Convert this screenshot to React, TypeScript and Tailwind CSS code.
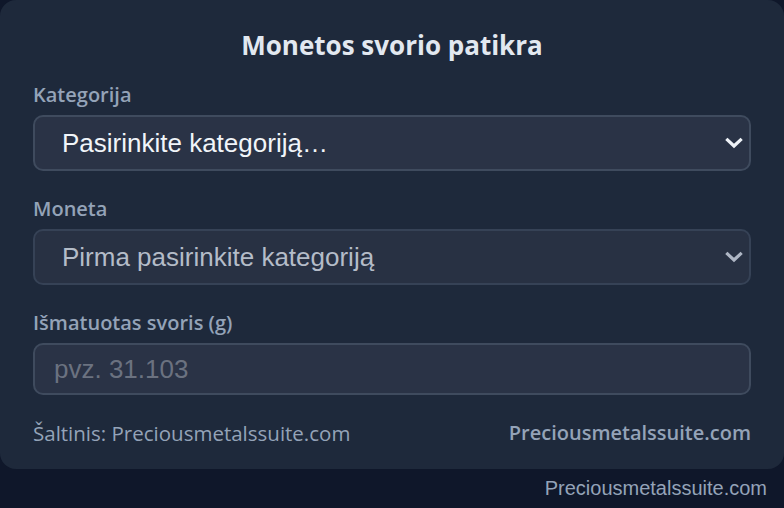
import { useState } from 'react';

const uiFont = { fontFamily: '"Open Sans", "Noto Sans", sans-serif' };
const fieldFont = { fontFamily: '"Liberation Sans", Arial, sans-serif' };

function Chevron({ muted }: { muted?: boolean }) {
  return (
    <svg
      className="pointer-events-none absolute right-[7px] top-1/2 -translate-y-1/2"
      width="20"
      height="20"
      viewBox="0 0 20 20"
      fill="none"
      stroke={muted ? '#aeb6c4' : '#eef2f7'}
      strokeWidth={3.2}
      strokeLinecap="square"
    >
      <path d="M3.5 7 10 13l6.5-6" />
    </svg>
  );
}

export default function App() {
  const [category, setCategory] = useState('');
  const [coin, setCoin] = useState('');
  const [weight, setWeight] = useState('');

  return (
    <div className="min-h-screen bg-[#0f172a]" style={uiFont}>
      <div className="rounded-[16px] bg-[#1e293b] px-[33px] pt-[29px] pb-[24px]">
        <h1 className="text-center text-[26px] leading-[32px] font-bold text-[#e2e8f0]">
          Monetos svorio patikra
        </h1>

        {/* Category */}
        <label className="mt-[22px] block text-[20px] leading-[24px] font-semibold text-[#94a3b8]">
          Kategorija
        </label>
        <div className="relative mt-[8px]">
          <select
            value={category}
            onChange={e => setCategory(e.target.value)}
            className="h-[56px] w-full appearance-none rounded-[10px] border-2 border-[#3f4b5e] bg-[#2a3346] pl-[27px] pr-[40px] text-[26px] text-[#f1f5f9] outline-none"
            style={fieldFont}
          >
            <option value="">Pasirinkite kategoriją…</option>
          </select>
          <Chevron />
        </div>

        {/* Coin */}
        <label className="mt-[26px] block text-[20px] leading-[24px] font-semibold text-[#94a3b8]">
          Moneta
        </label>
        <div className="relative mt-[8px]">
          <select
            value={coin}
            onChange={e => setCoin(e.target.value)}
            disabled
            className="h-[56px] w-full appearance-none rounded-[10px] border-2 border-[#364256] bg-[#283143] pl-[27px] pr-[40px] text-[26px] text-[#b4bcc8] outline-none"
            style={fieldFont}
          >
            <option value="">Pirma pasirinkite kategoriją</option>
          </select>
          <Chevron muted />
        </div>

        {/* Weight */}
        <label className="mt-[26px] block text-[20px] leading-[24px] font-semibold text-[#94a3b8]">
          Išmatuotas svoris (g)
        </label>
        <input
          value={weight}
          onChange={e => setWeight(e.target.value)}
          placeholder="pvz. 31.103"
          className="mt-[8px] block h-[52px] w-full rounded-[10px] border-2 border-[#3f4b5e] bg-[#2a3346] px-[19px] text-[26px] text-[#f1f5f9] outline-none placeholder:text-[#6b7280]"
          style={fieldFont}
        />

        {/* Source */}
        <div className="mt-[26px] flex items-center justify-between leading-[24px] text-[#94a3b8]">
          <span className="text-[20.5px]">Šaltinis: Preciousmetalssuite.com</span>
          <span className="text-[20px] font-semibold">Preciousmetalssuite.com</span>
        </div>
      </div>

      <div className="mt-[7px] pr-[17px] text-right text-[20px] leading-[24px] text-[#94a3b8]" style={fieldFont}>
        Preciousmetalssuite.com
      </div>
    </div>
  );
}
